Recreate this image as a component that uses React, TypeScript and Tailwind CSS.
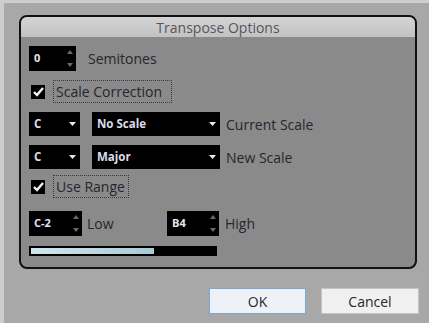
import React from "react";

const font = { fontFamily: '"Open Sans", "Noto Sans", sans-serif' };

function Spin({ value, w }: { value: string; w: string }) {
  return (
    <div className={`relative h-[25px] ${w} bg-black flex items-center`}>
      <span className="pl-[5px] text-[11px] font-bold text-[#e6e6ee]">{value}</span>
      <div className="absolute right-[3px] top-[3px] bottom-[3px] flex flex-col justify-between">
        <svg width="6" height="5" viewBox="0 0 6 5"><path d="M0 5 L3 1 L6 5 Z" fill="#6a6a6a" /></svg>
        <svg width="6" height="5" viewBox="0 0 6 5"><path d="M0 0 L3 4 L6 0 Z" fill="#6a6a6a" /></svg>
      </div>
    </div>
  );
}

function Drop({ value, w }: { value: string; w: string }) {
  return (
    <div className={`relative h-[24px] ${w} bg-black flex items-center`}>
      <span className="pl-[5px] text-[11.5px] font-bold text-[#dcdce8]">{value}</span>
      <svg className="absolute right-[4px] top-[10px]" width="7" height="4" viewBox="0 0 7 4">
        <path d="M0 0 L7 0 L3.5 4 Z" fill="#e8e8e8" />
      </svg>
    </div>
  );
}

function Check({ label, w }: { label: string; w: string }) {
  return (
    <div className="flex items-center h-[23px]">
      <div className="ml-[2px] w-[14px] h-[14px] bg-black flex items-center justify-center">
        <svg width="11" height="10" viewBox="0 0 11 10">
          <path d="M1 5 L4 8 L10 1" stroke="#f2f2f2" strokeWidth="2.4" fill="none" />
        </svg>
      </div>
      <div className={`ml-[8px] h-[23px] ${w} border border-dotted border-[#3a3a3a] flex items-center pl-[2px] text-[14px] text-[#26262e]`}>
        {label}
      </div>
    </div>
  );
}

export default function App() {
  return (
    <div className="w-[429px] h-[323px] bg-[#a8a8a8] border-l-[4px] border-t-[3px] border-[#cdcdcd] flex flex-col" style={font}>
      <div className="ml-[15px] mt-[12px] w-[398px] h-[254px] rounded-[8px] border-2 border-[#111] bg-[#8a8a8a] overflow-hidden flex flex-col">
        <div className="h-[20px] bg-gradient-to-b from-[#d4d4d4] to-[#c2c2c2] flex items-center justify-center text-[14px] text-[#55555c]">
          Transpose Options
        </div>
        <div className="pl-[8px] pt-[9px] flex flex-col">
          <div className="flex items-center h-[25px]">
            <Spin value="0" w="w-[47px]" />
            <span className="ml-[12px] text-[14px] text-[#26262e]">Semitones</span>
          </div>
          <div className="mt-[9px]">
            <Check label="Scale Correction" w="w-[119px]" />
          </div>
          <div className="mt-[9px] flex items-center">
            <Drop value="C" w="w-[51px]" />
            <div className="ml-[12px]"><Drop value="No Scale" w="w-[128px]" /></div>
            <span className="ml-[6px] text-[14px] text-[#26262e]">Current Scale</span>
          </div>
          <div className="mt-[9px] flex items-center">
            <Drop value="C" w="w-[51px]" />
            <div className="ml-[12px]"><Drop value="Major" w="w-[128px]" /></div>
            <span className="ml-[6px] text-[14px] text-[#26262e]">New Scale</span>
          </div>
          <div className="mt-[6px]">
            <Check label="Use Range" w="w-[76px]" />
          </div>
          <div className="mt-[13px] flex items-center">
            <Spin value="C-2" w="w-[53px]" />
            <span className="ml-[5px] text-[14px] text-[#26262e] w-[80px]">Low</span>
            <Spin value="B4" w="w-[52px]" />
            <span className="ml-[6px] text-[14px] text-[#26262e]">High</span>
          </div>
          <div className="mt-[10px] w-[188px] h-[10px] bg-black p-[2px] flex">
            <div className="w-[123px] h-full bg-gradient-to-r from-[#cfe6ec] to-[#a9cbd6]" />
          </div>
        </div>
      </div>
      <div className="mt-[19px] ml-[205px] flex gap-[15px]">
        <div className="w-[97px] h-[26px] bg-[#eef2f6] border border-[#7aa8d6] flex items-center justify-center text-[14px] text-[#26262e]">OK</div>
        <div className="w-[98px] h-[26px] bg-[#f0f0f0] border border-[#c4c4c4] flex items-center justify-center text-[14px] text-[#26262e]">Cancel</div>
      </div>
    </div>
  );
}
